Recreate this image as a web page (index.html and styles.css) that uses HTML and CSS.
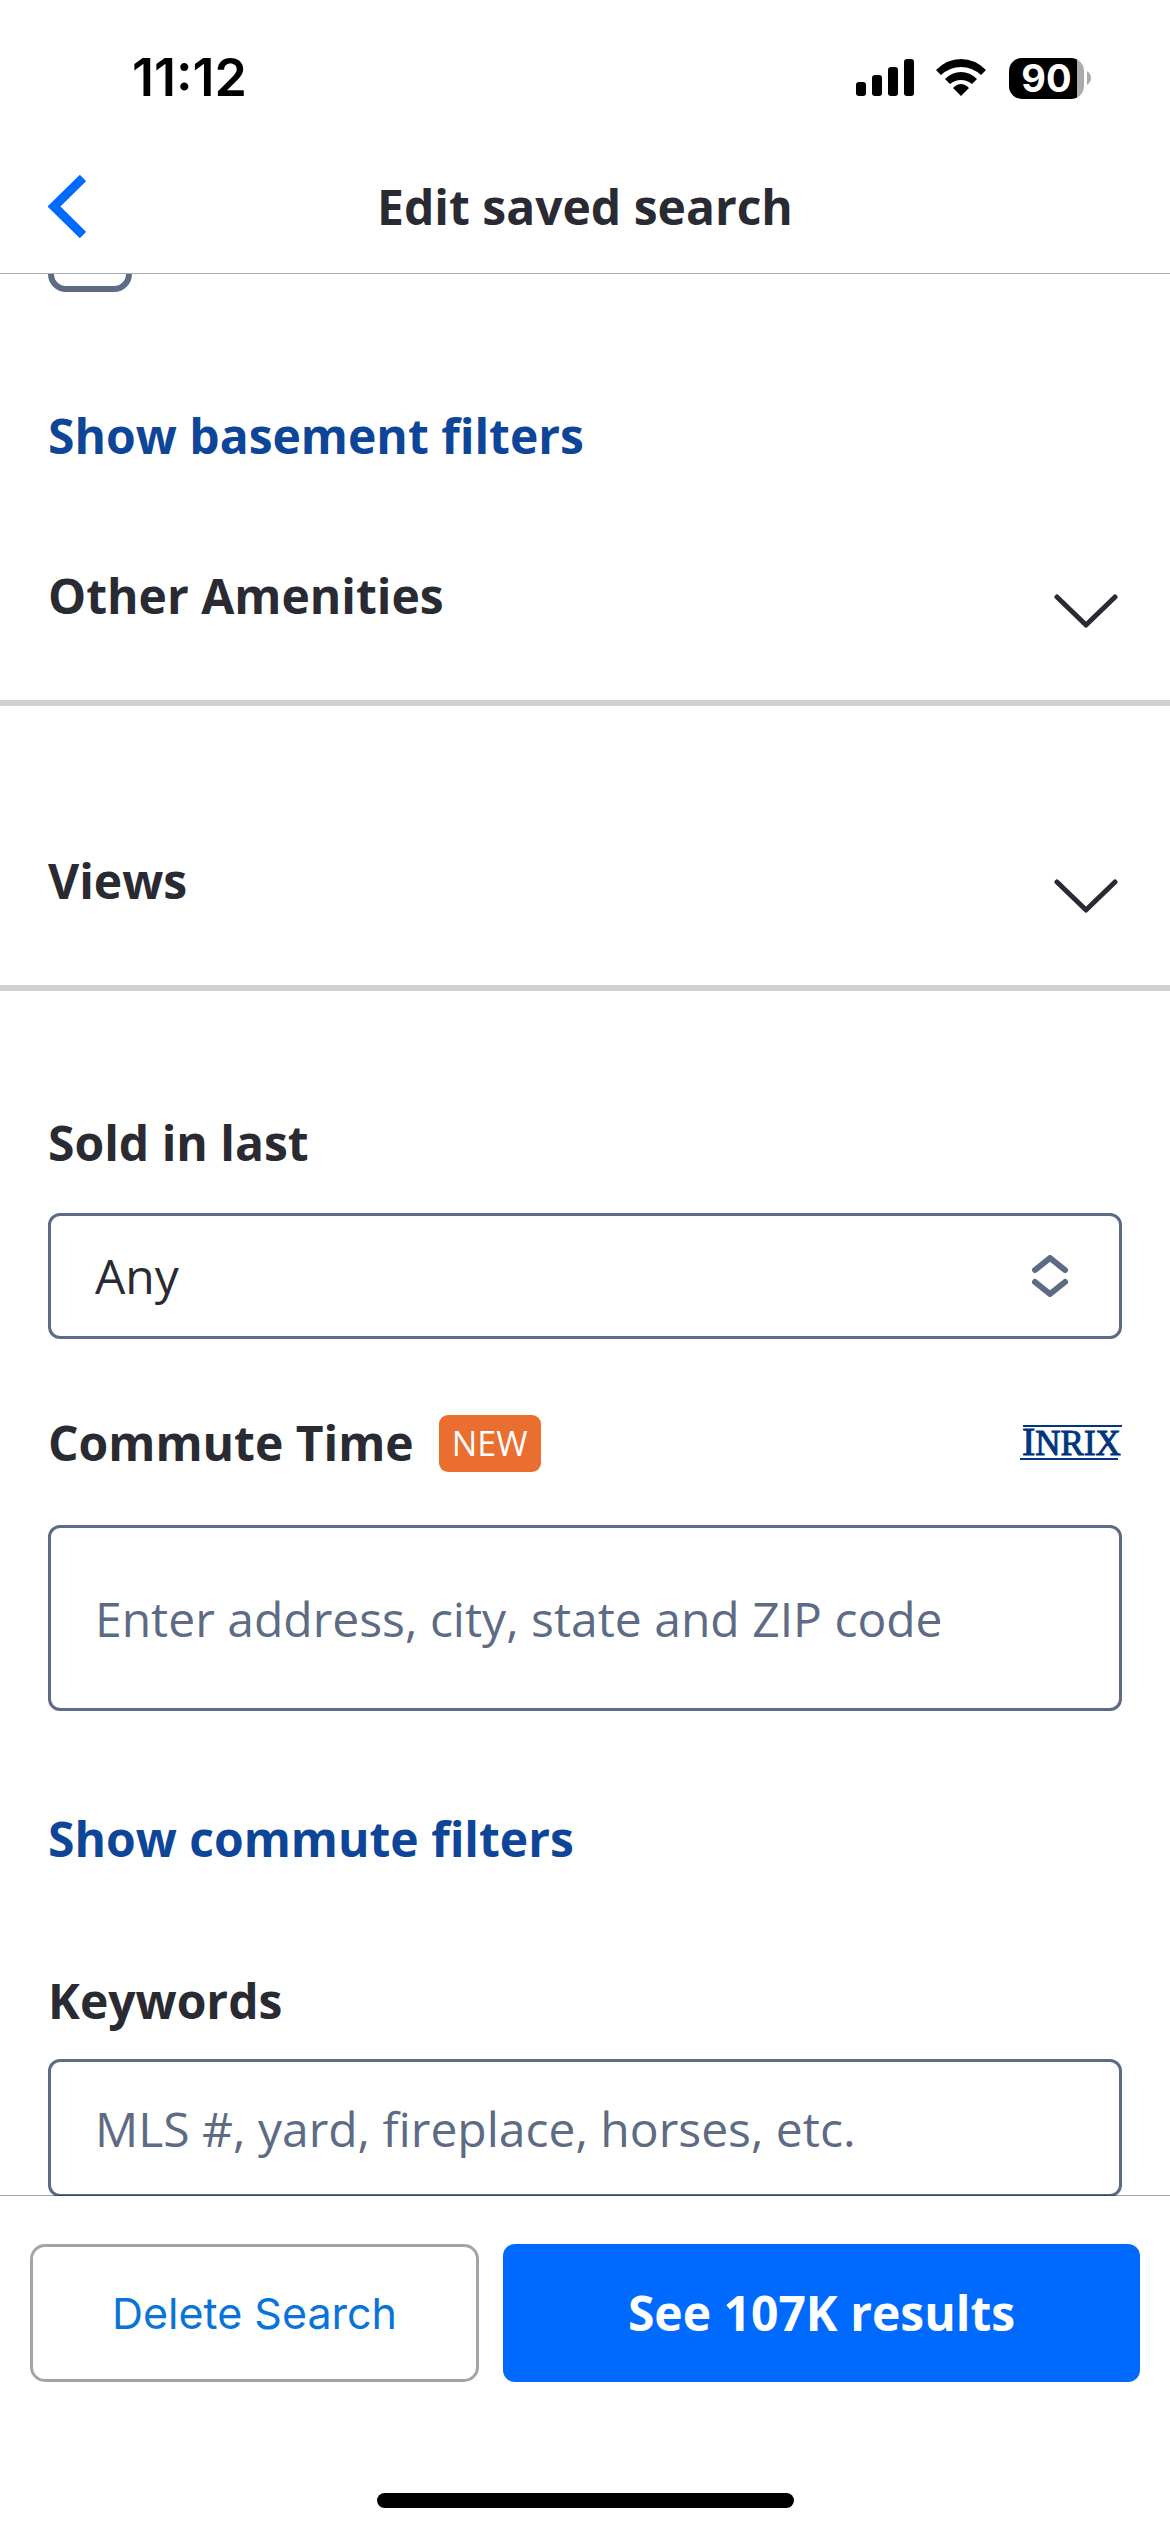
FILE: index.html
```
<!DOCTYPE html>
<html lang="en">
<head>
  <meta charset="UTF-8" />
  <meta name="viewport" content="width=device-width, initial-scale=1.0"/>
  <title>Edit saved search</title>
  <link rel="stylesheet" href="styles.css">
</head>
<body>

  <header class="header">
    <div class="status-bar">
      <span class="time">11:12</span>
      <div class="status-icons">
        <svg class="signal" width="58" height="38" viewBox="0 0 58 38">
          <rect x="0" y="23" width="10" height="14" rx="3"/>
          <rect x="16" y="16" width="10" height="21" rx="3"/>
          <rect x="32" y="8" width="10" height="29" rx="3"/>
          <rect x="48" y="0" width="10" height="37" rx="3"/>
        </svg>
        <svg class="wifi" width="50" height="38" viewBox="0 0 50 38">
          <path d="M0 11Q11 0 25 0T50 11L45 16Q36 8 25 8T5 16Z"/>
          <path d="M9 20Q16 13 25 13T41 20L36 25Q31 21 25 21T14 25Z"/>
          <path d="M17 29Q21 25 25 25T33 29L25 37Z"/>
        </svg>
        <div class="battery"><span>90</span></div>
        <svg class="battery-tip" width="4" height="14" viewBox="0 0 4 14"><path d="M0 0Q4 3 4 7T0 14Z"/></svg>
      </div>
    </div>
    <nav class="nav">
      <button class="back" type="button" aria-label="Back">
        <svg width="38" height="63" viewBox="0 0 38 63"><path d="M35 3L6 31.500L35 60"/></svg>
      </button>
      <h1 class="title">Edit saved search</h1>
    </nav>
  </header>

  <main class="filters">
    <input type="checkbox" class="checkbox" aria-label="Has basement">

    <a href="#" class="filter-link">Show basement filters</a>

    <button type="button" class="accordion">
      <span>Other Amenities</span>
      <svg class="chevron" width="64" height="40" viewBox="0 0 64 40"><path d="M3 5L32 33L61 5"/></svg>
    </button>

    <button type="button" class="accordion accordion-spaced">
      <span>Views</span>
      <svg class="chevron" width="64" height="40" viewBox="0 0 64 40"><path d="M3 5L32 33L61 5"/></svg>
    </button>

    <div class="field sold">
      <label for="sold">Sold in last</label>
      <div class="select-wrap">
        <select id="sold">
          <option>Any</option>
          <option>7 days</option>
          <option>30 days</option>
        </select>
        <svg class="select-icon" width="36" height="42" viewBox="0 0 36 42">
          <path d="M3 15L18 3L33 15M3 27L18 39L33 27"/>
        </svg>
      </div>
    </div>

    <div class="field commute">
      <div class="label-row">
        <label for="commute">Commute Time</label>
        <span class="badge">NEW</span>
        <svg class="inrix" width="102" height="38" viewBox="0 0 102 38" role="img" aria-label="INRIX">
          <path d="M3 2H102M0 35H98"/>
          <text x="2" y="31"><tspan class="inrix-big">I</tspan>NRIX</text>
        </svg>
      </div>
      <input type="text" id="commute" placeholder="Enter address, city, state and ZIP code">
    </div>

    <a href="#" class="filter-link">Show commute filters</a>

    <div class="field keywords">
      <label for="keywords">Keywords</label>
      <input type="text" id="keywords" placeholder="MLS #, yard, fireplace, horses, etc.">
    </div>
  </main>

  <footer class="footer">
    <div class="actions">
      <button type="button" class="delete">Delete Search</button>
      <button type="button" class="results">See 107K results</button>
    </div>
    <div class="home-bar"></div>
  </footer>

</body>
</html>
```
FILE: styles.css
```
* {
  box-sizing: border-box;
}

body {
  margin: 0;
  min-height: 100vh;
  display: flex;
  flex-direction: column;
  background: #fff;
  color: #2a2a33;
  font-family: "Open Sans", "Noto Sans", sans-serif;
  font-size: 48px;
  line-height: 72px;
}

button,
input,
select {
  font: inherit;
  color: inherit;
  margin: 0;
}

button {
  background: none;
  border: none;
  padding: 0;
  cursor: pointer;
}

svg {
  display: block;
  flex: none;
}

/* header */
.header {
  border-bottom: 1px solid #a9adb0;
}

.status-bar {
  display: flex;
  align-items: center;
  justify-content: space-between;
  height: 140px;
  padding: 16px 79px 0 132px;
}

.time {
  font-family: Inter, sans-serif;
  font-size: 52px;
  font-weight: 600;
  color: #000;
}

.status-icons {
  display: flex;
  align-items: center;
}

.wifi {
  margin: 0 23px 0 22px;
}

.battery {
  width: 75px;
  height: 41px;
  border-radius: 13px;
  background: linear-gradient(to right, #000 68px, #ababab 68px);
  color: #fff;
  font-family: Inter, sans-serif;
  font-size: 38px;
  font-weight: 700;
  line-height: 41px;
  text-align: center;
}

.battery-tip {
  margin-left: 3px;
  fill: #ababab;
}

.nav {
  position: relative;
  display: flex;
  align-items: center;
  justify-content: center;
  height: 133px;
}

.back {
  position: absolute;
  left: 48px;
}

.back path {
  fill: none;
  stroke: #006aff;
  stroke-width: 9;
}

.title {
  margin: 0;
  font-size: 48px;
  font-weight: 700;
}

/* filters */
.filters {
  flex: 1;
  display: flex;
  flex-direction: column;
  overflow: hidden;
}

.checkbox {
  appearance: none;
  flex: none;
  width: 84px;
  height: 84px;
  margin: -66px 48px 108px;
  border: 6px solid #5d6b84;
  border-radius: 18px;
}

.filter-link {
  margin: 0 48px;
  align-self: flex-start;
  color: #0d4599;
  font-weight: 700;
  text-decoration: none;
}

.accordion {
  display: flex;
  align-items: flex-end;
  justify-content: space-between;
  padding: 88px 52px 68px 48px;
  border-bottom: 6px solid #d0d0d2;
  font-weight: 700;
}

.accordion-spaced {
  padding-top: 139px;
}

.chevron path {
  fill: none;
  stroke: #2a2a33;
  stroke-width: 5;
  stroke-linecap: round;
  stroke-linejoin: round;
}

.field {
  display: flex;
  flex-direction: column;
  margin: 0 48px;
}

.field label {
  font-weight: 700;
}

.field input,
.field select {
  width: 100%;
  height: 138px;
  padding: 0 44px;
  background: #fff;
  border: 3px solid #5d6b84;
  border-radius: 12px;
}

.field input::placeholder {
  color: #5d6b84;
  opacity: 1;
}

.sold {
  margin-top: 116px;
  gap: 34px;
}

.field select {
  appearance: none;
  display: block;
  height: 126px;
}

.select-wrap {
  position: relative;
}

.select-icon {
  position: absolute;
  top: 42px;
  right: 54px;
  pointer-events: none;
}

.select-icon path {
  fill: none;
  stroke: #5d6b84;
  stroke-width: 6;
  stroke-linecap: round;
  stroke-linejoin: round;
}

.commute {
  margin-top: 68px;
  margin-bottom: 92px;
  gap: 46px;
}

.commute input {
  height: 186px;
}

.label-row {
  display: flex;
  align-items: center;
}

.badge {
  margin-left: 25px;
  padding: 0 13px;
  border-radius: 9px;
  background: #e96e30;
  color: #fff;
  font-size: 34px;
  line-height: 57px;
}

.inrix {
  margin-left: auto;
  overflow: visible;
}

.inrix path {
  stroke: #003580;
  stroke-width: 2;
}

.inrix text {
  font-family: "Liberation Serif", serif;
  font-size: 35px;
  fill: #003580;
  stroke: #003580;
}

.inrix .inrix-big {
  font-size: 40px;
}

.keywords {
  margin-top: 90px;
  gap: 22px;
}

/* footer */
.footer {
  position: relative;
  margin-top: -2px;
  padding: 48px 30px 24px;
  background: #fff;
  background-clip: padding-box;
  border-top: 1px solid rgba(0, 0, 0, 0.35);
}

.actions {
  display: grid;
  grid-template-columns: 449fr 637fr;
  gap: 24px;
}

.delete {
  height: 138px;
  border: 3px solid #a4a4a4;
  border-radius: 15px;
  color: #0874d9;
  font-family: Inter, sans-serif;
  font-size: 43px;
}

.results {
  height: 138px;
  border-radius: 12px;
  background: #006aff;
  color: #fff;
  font-weight: 700;
}

.home-bar {
  width: 417px;
  height: 15px;
  margin: 111px auto 0;
  border-radius: 8px;
  background: #000;
}
```
